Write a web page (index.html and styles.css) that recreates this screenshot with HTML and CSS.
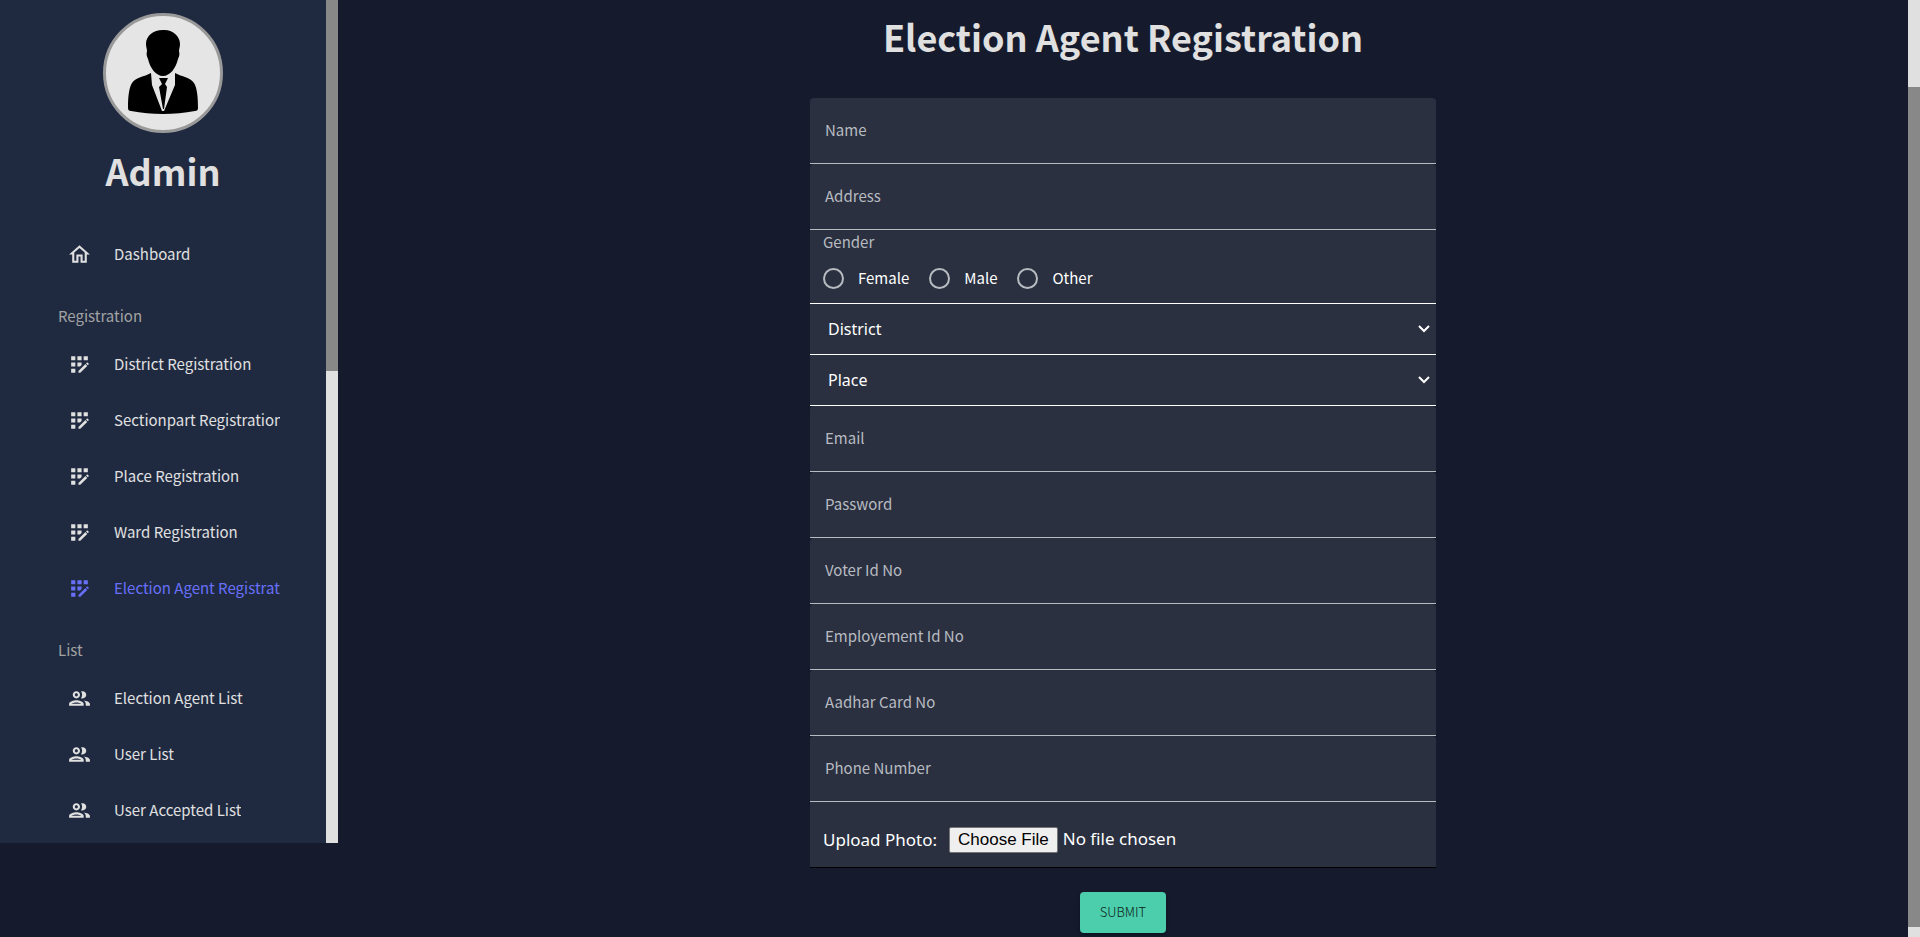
FILE: index.html
```html
<!DOCTYPE html>
<html lang="en">
<head>
<meta charset="utf-8">
<title>Election Agent Registration</title>
<link rel="stylesheet" href="styles.css">
</head>
<body>
<svg class="sprite" aria-hidden="true">
  <symbol id="home" viewBox="0 0 24 24"><path d="m12 5.69 5 4.5V18h-2v-6H9v6H7v-7.81l5-4.5M12 3 2 12h3v8h6v-6h2v6h6v-8h3L12 3z"/></symbol>
  <symbol id="reg" viewBox="0 0 24 24"><path d="M10 4h4v4h-4zM4 16h4v4H4zm0-6h4v4H4zm0-6h4v4H4zm10 8.42V10h-4v4h2.42zm6.88-1.13-1.17-1.17c-.16-.16-.42-.16-.58 0l-.88.88L20 12.75l.88-.88c.16-.16.16-.42 0-.58zM11 18.25V20h1.75l6.67-6.67-1.75-1.75zM16 4h4v4h-4z"/></symbol>
  <symbol id="people" viewBox="0 0 24 24"><path d="M9 13.75c-2.34 0-7 1.17-7 3.5V19h14v-1.75c0-2.33-4.66-3.5-7-3.5zM4.34 17c.84-.58 2.87-1.25 4.66-1.25s3.82.67 4.66 1.25H4.34zM9 12c1.93 0 3.5-1.57 3.5-3.5S10.93 5 9 5 5.5 6.57 5.5 8.5 7.07 12 9 12zm0-5c.83 0 1.5.67 1.5 1.5S9.83 10 9 10s-1.5-.67-1.5-1.5S8.17 7 9 7zm7.04 6.81c1.16.84 1.96 1.96 1.96 3.44V19h4v-1.75c0-2.02-3.5-3.17-5.96-3.44zM15 12c1.93 0 3.5-1.57 3.5-3.5S16.93 5 15 5c-.54 0-1.04.13-1.5.35.63.89 1 1.98 1 3.15s-.37 2.26-1 3.15c.46.22.96.35 1.5.35z"/></symbol>
</svg>
<div class="app">
  <aside class="sidebar">
    <div class="sidebar-body">
      <div class="profile">
        <svg class="avatar" viewBox="0 0 114 114" role="img" aria-label="Admin avatar">
          <path d="M57 14c8-1 17 5 17 14 0 3-1 5-1 7 1 3 0 6-1 8-2 9-8 17-15 17s-13-8-15-17c-1-2-2-5-1-8 0-2-1-4-1-7 0-8 7-14 17-14z"/>
          <path d="M45 57C38 61 30 61 26 67c-3 5-4 13-4 25 0 2 1 3 3 3 21 4 43 4 64 0 2 0 3-1 3-3 0-12-1-20-4-25-4-6-12-6-19-10v12L58 95h-2L46 69z"/>
          <path d="M53 62h9l-3 6 2 3-3 22h-1l-4-22 3-3z"/>
        </svg>
        <h2 class="profile-name">Admin</h2>
      </div>
      <nav class="menu">
        <a class="item" href="#"><svg class="icon"><use href="#home"/></svg><span class="item-text">Dashboard</span></a>
        <h3 class="group">Registration</h3>
        <a class="item" href="#"><svg class="icon"><use href="#reg"/></svg><span class="item-text">District Registration</span></a>
        <a class="item" href="#"><svg class="icon"><use href="#reg"/></svg><span class="item-text">Sectionpart Registration</span></a>
        <a class="item" href="#"><svg class="icon"><use href="#reg"/></svg><span class="item-text">Place Registration</span></a>
        <a class="item" href="#"><svg class="icon"><use href="#reg"/></svg><span class="item-text">Ward Registration</span></a>
        <a class="item active" href="#"><svg class="icon"><use href="#reg"/></svg><span class="item-text">Election Agent Registration</span></a>
        <h3 class="group">List</h3>
        <a class="item" href="#"><svg class="icon"><use href="#people"/></svg><span class="item-text">Election Agent List</span></a>
        <a class="item" href="#"><svg class="icon"><use href="#people"/></svg><span class="item-text">User List</span></a>
        <a class="item" href="#"><svg class="icon"><use href="#people"/></svg><span class="item-text">User Accepted List</span></a>
      </nav>
    </div>
    <div class="track track-side"><div class="thumb"></div></div>
  </aside>
  <main class="main">
    <h1 class="title">Election Agent Registration</h1>
    <form class="form">
      <div class="field"><label for="name">Name</label><input id="name" type="text"></div>
      <div class="field"><label for="address">Address</label><input id="address" type="text"></div>
      <fieldset class="gender">
        <legend>Gender</legend>
        <div class="radios">
          <label><input type="radio" name="gender">Female</label>
          <label><input type="radio" name="gender">Male</label>
          <label><input type="radio" name="gender">Other</label>
        </div>
      </fieldset>
      <select class="select" aria-label="District"><option>District</option></select>
      <select class="select" aria-label="Place"><option>Place</option></select>
      <div class="field"><label for="email">Email</label><input id="email" type="email"></div>
      <div class="field"><label for="password">Password</label><input id="password" type="password"></div>
      <div class="field"><label for="voter">Voter Id No</label><input id="voter" type="text"></div>
      <div class="field"><label for="employment">Employement Id No</label><input id="employment" type="text"></div>
      <div class="field"><label for="aadhar">Aadhar Card No</label><input id="aadhar" type="text"></div>
      <div class="field"><label for="phone">Phone Number</label><input id="phone" type="tel"></div>
      <div class="upload"><label for="photo">Upload Photo:</label><input id="photo" type="file"></div>
      <button class="submit" type="submit">SUBMIT</button>
    </form>
  </main>
  <div class="track track-page"><div class="thumb"></div></div>
</div>
</body>
</html>
```
FILE: styles.css
```css
* { box-sizing: border-box; }

body {
  margin: 0;
  background: #151b2d;
  color: #e0e0e0;
  font: 15px/24px "Noto Sans CJK SC", "Noto Sans", sans-serif;
}

h1, h2, h3 { margin: 0; }

.sprite { display: none; }

.app {
  display: flex;
  align-items: flex-start;
  height: 100vh;
  overflow: hidden;
}

/* Sidebar */
.sidebar {
  display: flex;
  flex: none;
  width: 338px;
  height: 90vh;
  overflow: hidden;
  background: #1f2a40;
}

.sidebar-body {
  flex: 1;
  min-width: 0;
  padding-top: 13px;
}

.profile {
  display: flex;
  flex-direction: column;
  align-items: center;
  gap: 13px;
}

.avatar {
  width: 120px;
  height: 120px;
  border: 3px solid #999;
  border-radius: 50%;
  background: #e5e5e5;
}

.profile-name {
  font-size: 36px;
  line-height: 48px;
  font-weight: 700;
}

.menu { padding: 32px 46px 0 50px; }

.item {
  display: flex;
  align-items: center;
  gap: 22px;
  height: 56px;
  padding-left: 17px;
  color: #e0e0e0;
  text-decoration: none;
}

.item.active { color: #6870fa; }

.item-text {
  overflow: hidden;
  white-space: nowrap;
}

.icon {
  flex: none;
  width: 25px;
  height: 25px;
  fill: currentColor;
}

.group {
  padding: 22px 8px 8px;
  color: #a3a3a3;
  font-size: 15px;
  font-weight: 400;
}

/* Scrollbars */
.track {
  display: flex;
  flex: none;
  width: 12px;
  height: 100%;
  background: #e0e0e0;
}

.thumb {
  width: 100%;
  height: 44%;
  background: #888;
}

.track-page { padding: 87px 0 10px; }
.track-page .thumb { height: 100%; }

/* Form */
.main {
  display: flex;
  flex: 1;
  flex-direction: column;
  align-items: center;
  gap: 38px;
  min-width: 0;
  padding-top: 12px;
}

.title {
  font-size: 36px;
  line-height: 48px;
  font-weight: 700;
}

.form {
  display: flex;
  flex-direction: column;
  width: 100%;
  max-width: 626px;
}

.field {
  display: grid;
  align-items: center;
  height: 66px;
  border-bottom: 1px solid #b8bbc0;
  border-radius: 4px 4px 0 0;
  background: #2a3040;
  color: #b8bbc0;
}

.field label, .field input { grid-area: 1 / 1; }

.field label {
  padding: 0 15px 2px;
  pointer-events: none;
}

.field input {
  width: 100%;
  height: 100%;
  padding: 24px 15px 8px;
  border: 0;
  background: transparent;
  color: #fff;
  font: inherit;
}

.gender {
  min-width: 0;
  height: 74px;
  margin: 0;
  padding: 0 13px;
  border: 0;
  border-bottom: 1px solid #fff;
  background: #2a3040;
}

.gender legend {
  float: left;
  width: 100%;
  padding: 0;
  color: #b8bbc0;
}

.radios {
  display: flex;
  clear: both;
  gap: 20px;
  padding-top: 12px;
  color: #fff;
}

.radios label {
  display: flex;
  align-items: center;
  gap: 14px;
}

.radios input {
  width: 21px;
  height: 21px;
  margin: 0;
  border: 2px solid #b8bbc0;
  border-radius: 50%;
  appearance: none;
}

.select {
  width: 100%;
  height: 51px;
  padding: 0 24px 0 18px;
  border: 0;
  border-bottom: 1px solid #fff;
  border-radius: 0;
  appearance: none;
  background: #2a3040 url("data:image/svg+xml,%3Csvg xmlns='http://www.w3.org/2000/svg' width='12' height='8' fill='none' stroke='white' stroke-width='2'%3E%3Cpath d='M1 1l5 5 5-5'/%3E%3C/svg%3E") no-repeat right 6px center;
  color: #fff;
  font: 16px "Noto Sans", sans-serif;
}

.upload {
  display: flex;
  align-items: center;
  gap: 12px;
  height: 66px;
  padding: 10px 13px 0;
  border-bottom: 1px solid #000;
  background: #2a3040;
  color: #fff;
  font: 17px "Noto Sans", sans-serif;
}

.upload input {
  flex: 1;
  min-width: 0;
  color: #fff;
  font: inherit;
}

.upload input::file-selector-button {
  height: 26px;
  margin-right: 5px;
  padding: 0 8px;
  border: 1px solid #767676;
  border-radius: 2px;
  background: #efefef;
  color: #000;
  font: 17px "Liberation Sans", sans-serif;
}

.submit {
  align-self: center;
  height: 41px;
  margin-top: 24px;
  padding: 0 20px 2px;
  border: 0;
  border-radius: 4px;
  background: #4cceac;
  color: #0a1b16;
  font: 300 13px/20px "Noto Sans CJK SC", sans-serif;
  box-shadow: 0 2px 4px rgba(0, 0, 0, .3);
}
```
